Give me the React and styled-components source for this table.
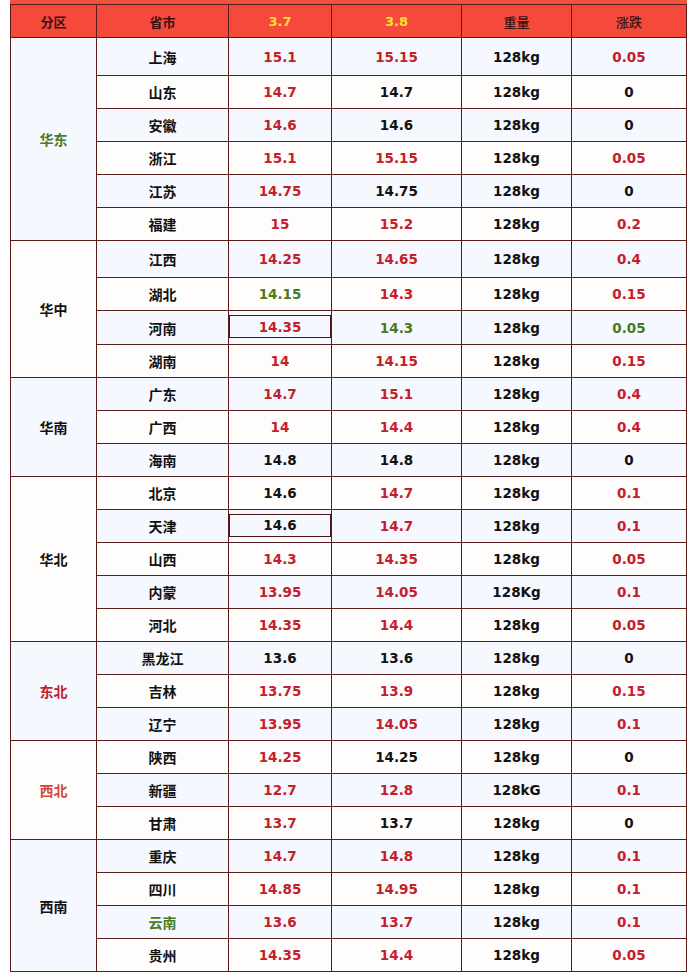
import React from "react";
import styled, { createGlobalStyle } from "styled-components";

const GlobalStyle = createGlobalStyle`
  html, body {
    margin: 0;
    padding: 0;
    background: #ffffff;
  }
  body {
    font-family: "DejaVu Sans", "Noto Sans CJK SC", sans-serif;
  }
`;

const colors = {
  r: "#c3202b",
  g: "#4a7a1d",
  k: "#111111",
  s: "#d3483c",
};

const groups = [
  {
    name: "华东", tone: "g", rows: [
      ["上海", "15.1", "r", "15.15", "r", "128kg", "0.05", "r", 38],
      ["山东", "14.7", "r", "14.7", "k", "128kg", "0", "k"],
      ["安徽", "14.6", "r", "14.6", "k", "128kg", "0", "k"],
      ["浙江", "15.1", "r", "15.15", "r", "128kg", "0.05", "r"],
      ["江苏", "14.75", "r", "14.75", "k", "128kg", "0", "k"],
      ["福建", "15", "r", "15.2", "r", "128kg", "0.2", "r"],
    ],
  },
  {
    name: "华中", tone: "k", rows: [
      ["江西", "14.25", "r", "14.65", "r", "128kg", "0.4", "r", 37],
      ["湖北", "14.15", "g", "14.3", "r", "128kg", "0.15", "r"],
      ["河南", "14.35", "r", "14.3", "g", "128kg", "0.05", "g", 34, true],
      ["湖南", "14", "r", "14.15", "r", "128kg", "0.15", "r"],
    ],
  },
  {
    name: "华南", tone: "k", rows: [
      ["广东", "14.7", "r", "15.1", "r", "128kg", "0.4", "r"],
      ["广西", "14", "r", "14.4", "r", "128kg", "0.4", "r"],
      ["海南", "14.8", "k", "14.8", "k", "128kg", "0", "k"],
    ],
  },
  {
    name: "华北", tone: "k", rows: [
      ["北京", "14.6", "k", "14.7", "r", "128kg", "0.1", "r"],
      ["天津", "14.6", "k", "14.7", "r", "128kg", "0.1", "r", 33, true],
      ["山西", "14.3", "r", "14.35", "r", "128kg", "0.05", "r"],
      ["内蒙", "13.95", "r", "14.05", "r", "128Kg", "0.1", "r"],
      ["河北", "14.35", "r", "14.4", "r", "128kg", "0.05", "r"],
    ],
  },
  {
    name: "东北", tone: "r", rows: [
      ["黑龙江", "13.6", "k", "13.6", "k", "128kg", "0", "k"],
      ["吉林", "13.75", "r", "13.9", "r", "128kg", "0.15", "r"],
      ["辽宁", "13.95", "r", "14.05", "r", "128kg", "0.1", "r"],
    ],
  },
  {
    name: "西北", tone: "s", rows: [
      ["陕西", "14.25", "r", "14.25", "k", "128kg", "0", "k"],
      ["新疆", "12.7", "r", "12.8", "r", "128kG", "0.1", "r"],
      ["甘肃", "13.7", "r", "13.7", "k", "128kg", "0", "k"],
    ],
  },
  {
    name: "西南", tone: "k", rows: [
      ["重庆", "14.7", "r", "14.8", "r", "128kg", "0.1", "r"],
      ["四川", "14.85", "r", "14.95", "r", "128kg", "0.1", "r"],
      ["云南", "13.6", "r", "13.7", "r", "128kg", "0.1", "r", 33, false, "g"],
      ["贵州", "14.35", "r", "14.4", "r", "128kg", "0.05", "r"],
    ],
  },
];

export default function App() {
  let rowIndex = 0;
  return (
    <>
      <GlobalStyle />
      <Wrap>
        <TopStrip />
        <Table>
          <colgroup>
            <col style={{ width: 86 }} />
            <col style={{ width: 132 }} />
            <col style={{ width: 103 }} />
            <col style={{ width: 130 }} />
            <col style={{ width: 110 }} />
            <col style={{ width: 115 }} />
          </colgroup>
          <thead>
            <tr>
              <Th>分区</Th>
              <Th>省市</Th>
              <Th $accent>3.7</Th>
              <Th $accent>3.8</Th>
              <Th $light>重量</Th>
              <Th $light>涨跌</Th>
            </tr>
          </thead>
          <tbody>
            {groups.map((g, gi) =>
              g.rows.map((row, ri) => {
                const [prov, a, at, b, bt, w, d, dt, h = 33, boxed, pt = "k"] = row;
                const alt = rowIndex++ % 2 === 0;
                return (
                  <tr key={prov}>
                    {ri === 0 && (
                      <Region rowSpan={g.rows.length} $tone={g.tone} $alt={gi % 2 === 0}>
                        {g.name}
                      </Region>
                    )}
                    <Prov $h={h} $alt={alt} $tone={pt}>{prov}</Prov>
                    <Td $alt={alt} $tone={at}>
                      {boxed ? <Boxed>{a}</Boxed> : a}
                    </Td>
                    <Td $alt={alt} $tone={bt}>{b}</Td>
                    <Td $alt={alt} $tone="k">{w}</Td>
                    <Td $alt={alt} $tone={dt}>{d}</Td>
                  </tr>
                );
              })
            )}
          </tbody>
        </Table>
      </Wrap>
    </>
  );
}

const Wrap = styled.div`
  padding: 0 0 0 10px;
  width: 677px;
`;

const TopStrip = styled.div`
  height: 4px;
  background: #f4503f;
`;

const Table = styled.table`
  width: 677px;
  table-layout: fixed;
  border-collapse: collapse;
  border: 1px solid #5a1c18;
  font-weight: bold;
  font-size: 13.5px;
`;

const Th = styled.th`
  height: 32px;
  padding: 0;
  background: #f5493c;
  border: 1px solid #5a1c18;
  font-size: 13px;
  font-weight: ${p => (p.$light ? 500 : 700)};
  color: ${p => (p.$accent ? "#ffe033" : "#3a1210")};
  font-family: ${p => (p.$accent ? `"DejaVu Sans", sans-serif` : `"Noto Sans CJK SC", sans-serif`)};
`;

const Td = styled.td`
  padding: 0;
  text-align: center;
  vertical-align: middle;
  border: 1px solid #5a1c18;
  background: ${p => (p.$alt ? "#f5f8fe" : "#fffcfc")};
  color: ${p => colors[p.$tone]};
`;

const Prov = styled(Td)`
  height: ${p => p.$h - 1}px;
  font-family: "Noto Sans CJK SC", sans-serif;
  font-size: 14px;
`;

const Region = styled.td`
  padding: 0;
  text-align: center;
  border: 1px solid #5a1c18;
  font-family: "Noto Sans CJK SC", sans-serif;
  font-size: 14px;
  background: ${p => (p.$alt ? "#f5f8fe" : "#fffcfc")};
  color: ${p => colors[p.$tone]};
`;

const Boxed = styled.div`
  height: 21px;
  margin: 0 0 2px;
  border: 1px solid #4a1512;
  display: flex;
  align-items: center;
  justify-content: center;
`;
